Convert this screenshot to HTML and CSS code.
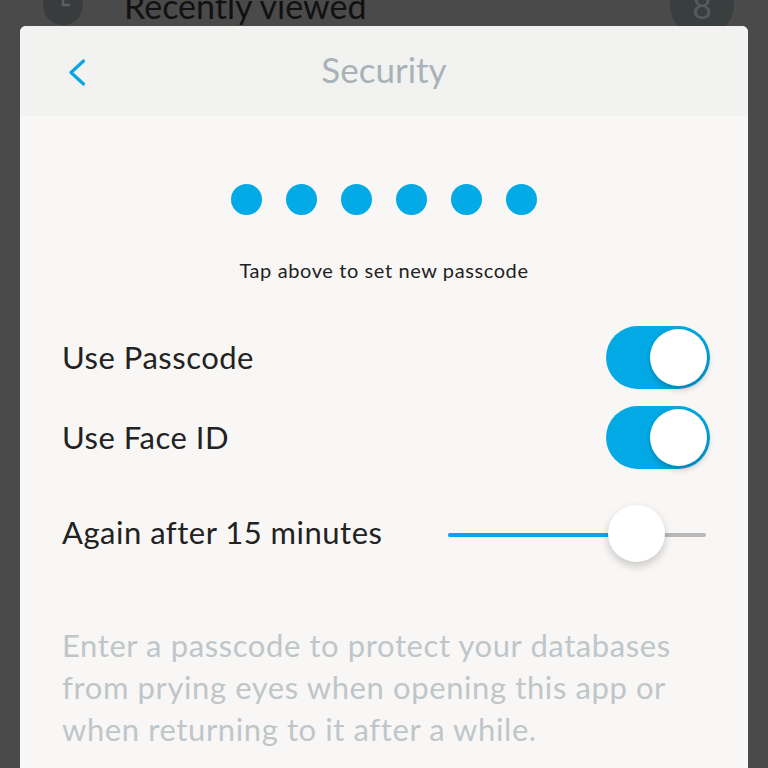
FILE: index.html
```html
<!DOCTYPE html>
<html>
<head>
    <title>Security</title>
    <link rel="stylesheet" href="styles.css">
</head>
<body>
    <div class="list-row">
        <div class="row-icon">
            <svg width="40" height="40" viewBox="0 0 40 40">
                <circle cx="20" cy="20" r="20" fill="#393c3d"/>
                <path d="M20 10 V20 H27" stroke="#5c5f60" stroke-width="2.5" fill="none"/>
            </svg>
        </div>
        <div class="row-title">Recently viewed</div>
        <div class="row-badge">8</div>
    </div>

    <div class="sheet">
        <div class="sheet-header">
            <button class="back-btn" aria-label="Back">
                <svg width="20" height="29" viewBox="0 0 20 29">
                    <path d="M16.5 3 L4 14.5 L16.5 26" stroke="#0aa6e4" stroke-width="3.2" fill="none" stroke-linecap="round" stroke-linejoin="round"/>
                </svg>
            </button>
            <h1 class="sheet-title">Security</h1>
        </div>

        <div class="sheet-body">
            <div class="passcode-dots">
                <span class="dot"></span>
                <span class="dot"></span>
                <span class="dot"></span>
                <span class="dot"></span>
                <span class="dot"></span>
                <span class="dot"></span>
            </div>
            <p class="hint">Tap above to set new passcode</p>

            <div class="setting-row first">
                <span class="setting-label">Use Passcode</span>
                <span class="toggle on"><span class="knob"></span></span>
            </div>
            <div class="setting-row">
                <span class="setting-label">Use Face ID</span>
                <span class="toggle on"><span class="knob"></span></span>
            </div>
            <div class="setting-row slider-row">
                <span class="setting-label">Again after 15 minutes</span>
                <div class="slider">
                    <div class="slider-fill" style="width: 73%"></div>
                    <span class="slider-knob" style="left: 73%"></span>
                </div>
            </div>

            <p class="note">Enter a passcode to protect your databases from prying eyes when opening this app or when returning to it after a while.</p>
        </div>
    </div>
</body>
</html>
```

FILE: styles.css
```css
body {
    margin: 0;
    background: #4a4a4a;
    font-family: Lato, "Noto Sans", sans-serif;
    height: 768px;
    overflow: hidden;
}

/* list behind the sheet */
.list-row {
    display: flex;
    align-items: center;
    height: 64px;
    margin-top: -27px;
    padding: 0 34px 0 43px;
}
.row-icon { width: 40px; height: 40px; }
.row-title {
    flex: 1;
    margin-left: 41px;
    font-size: 34px;
    color: #111;
}
.row-badge {
    width: 64px;
    height: 64px;
    border-radius: 50%;
    background: #393e3f;
    color: #555a5b;
    font-size: 34px;
    display: flex;
    align-items: center;
    justify-content: center;
}

/* sheet */
.sheet {
    margin: -11px 20px 0;
    border-radius: 6px 6px 0 0;
    overflow: hidden;
    background: #f8f7f5;
    position: relative;
}
.sheet-header {
    height: 90px;
    background: #f2f2f0;
    display: flex;
    align-items: center;
    justify-content: center;
    position: relative;
}
.back-btn {
    position: absolute;
    left: 47px;
    top: 32px;
    border: none;
    background: none;
    padding: 0;
    cursor: pointer;
}
.sheet-title {
    margin: 0 0 5px;
    font-size: 35px;
    font-weight: 400;
    color: #a8b2b8;
}

.sheet-body {
    padding: 68px 38px 40px 42px;
}
.passcode-dots {
    display: flex;
    justify-content: center;
    gap: 24px;
    padding-right: 4px;
}
.dot {
    width: 31px;
    height: 31px;
    border-radius: 50%;
    background: #02abe6;
}
.hint {
    margin: 43px 0 0;
    padding-right: 4px;
    text-align: center;
    font-size: 20px;
    line-height: 24px;
    letter-spacing: 0.6px;
    color: #222;
}

.setting-row {
    display: flex;
    align-items: center;
    justify-content: space-between;
    height: 80px;
}
.setting-row.first { margin-top: 35px; }
.setting-label {
    font-size: 31px;
    letter-spacing: 0.5px;
    color: #222;
}
.toggle {
    width: 104px;
    height: 63px;
    border-radius: 32px;
    background: #02a9e4;
    position: relative;
}
.toggle .knob {
    position: absolute;
    top: 3px;
    right: 3px;
    width: 57px;
    height: 57px;
    border-radius: 50%;
    background: #fff;
    box-shadow: 1px 3px 6px rgba(0, 0, 0, 0.25);
}

.slider-row { margin-top: 15px; }
.slider {
    width: 258px;
    height: 4px;
    border-radius: 2px;
    background: #b8b8b8;
    position: relative;
    margin: 5px 4px 0 0;
}
.slider-fill {
    height: 100%;
    border-radius: 2px;
    background: #02abe6;
}
.slider-knob {
    position: absolute;
    top: 50%;
    width: 57px;
    height: 57px;
    margin: -30px 0 0 -28px;
    border-radius: 50%;
    background: #fff;
    box-shadow: 0 4px 8px rgba(0, 0, 0, 0.2);
}

.note {
    margin: 52px 0 0;
    font-size: 31px;
    line-height: 42px;
    letter-spacing: 0.6px;
    color: #bfc6ca;
}
```
